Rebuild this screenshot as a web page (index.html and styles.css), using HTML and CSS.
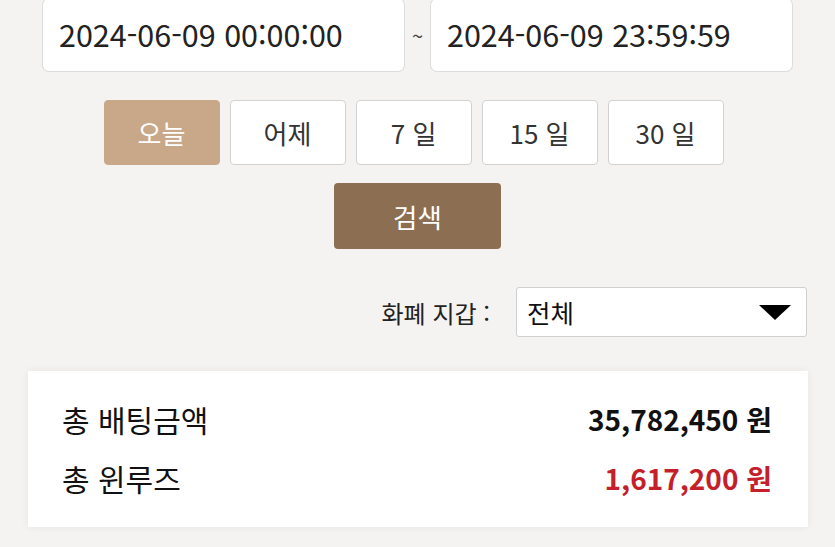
FILE: index.html
```html
<!DOCTYPE html>
<html lang="ko">
<head>
	<meta charset="UTF-8">
	<title>배팅 내역</title>
	<link rel="stylesheet" href="styles.css">
</head>
<body>
<div id="wrap">
	<div class="dates">
		<div class="date-box">2024-06-09 00:00:00</div>
		<span class="tilde">~</span>
		<div class="date-box">2024-06-09 23:59:59</div>
	</div>
	<div class="quick">
		<button class="on">오늘</button>
		<button>어제</button>
		<button>7 일</button>
		<button>15 일</button>
		<button>30 일</button>
	</div>
	<div class="search"><button>검색</button></div>
	<div class="currency">
		<span>화폐 지갑 :</span>
		<div class="select">전체<i class="arrow"></i></div>
	</div>
	<div class="card">
		<dl><dt>총 배팅금액</dt><dd>35,782,450 원</dd></dl>
		<dl><dt>총 윈루즈</dt><dd class="red">1,617,200 원</dd></dl>
	</div>
</div>
</body>
</html>
```

FILE: styles.css
```css
*{padding: 0;margin: 0;box-sizing: border-box;}
body{background: #f4f3f1;font-family: "Noto Sans CJK KR","Noto Sans",sans-serif;color: #222;}
#wrap{width: 835px;height: 547px;overflow: hidden;}
.dates{display: flex;align-items: center;padding: 0 42px;margin-top: -2px;}
.date-box{width: 363px;height: 74px;background: #fff;border: 1px solid #dcdcdc;border-top-color: #e6e6e6;border-radius: 7px;font-size: 30.5px;line-height: 70px;padding-left: 16px;color: #222;}
.tilde{width: 25px;text-align: center;font-size: 20px;color: #444;}
.quick{display: flex;justify-content: center;gap: 10px;margin-top: 28px;padding-right: 8px;}
.quick button{width: 116px;height: 65px;background: #fff;border: 1px solid #d2d2d2;border-radius: 4px;font-family: inherit;font-size: 26px;color: #333;}
.quick button.on{background: #c9a88a;border-color: #c9a88a;color: #fff;}
.search{display: flex;justify-content: center;margin-top: 18px;}
.search button{width: 167px;height: 66px;background: #8c6f52;border: none;border-radius: 4px;font-family: inherit;font-size: 26.5px;color: #fff;}
.currency{display: flex;justify-content: flex-end;align-items: center;gap: 26px;margin-top: 38px;padding-right: 28px;}
.currency span{font-size: 24px;color: #222;}
.select{position: relative;width: 291px;height: 50px;background: #fff;border: 1px solid #cfcfcf;border-radius: 3px;font-size: 25.5px;line-height: 47px;padding-left: 10px;color: #111;}
.arrow{position: absolute;right: 15px;top: 17px;width: 0;height: 0;border-left: 16px solid transparent;border-right: 16px solid transparent;border-top: 15px solid #000;}
.card{margin: 34px 27px 0 28px;height: 156px;background: #fff;box-shadow: 0 0 8px rgba(0,0,0,0.06);padding: 18px 36px 0 34px;}
.card dl{display: flex;justify-content: space-between;align-items: center;height: 59px;}
.card dt{color: #111;font-size: 30px;}
.card dd{font-weight: bold;color: #111;font-size: 28px;}
.card dd.red{color: #c41f2b;}
```
